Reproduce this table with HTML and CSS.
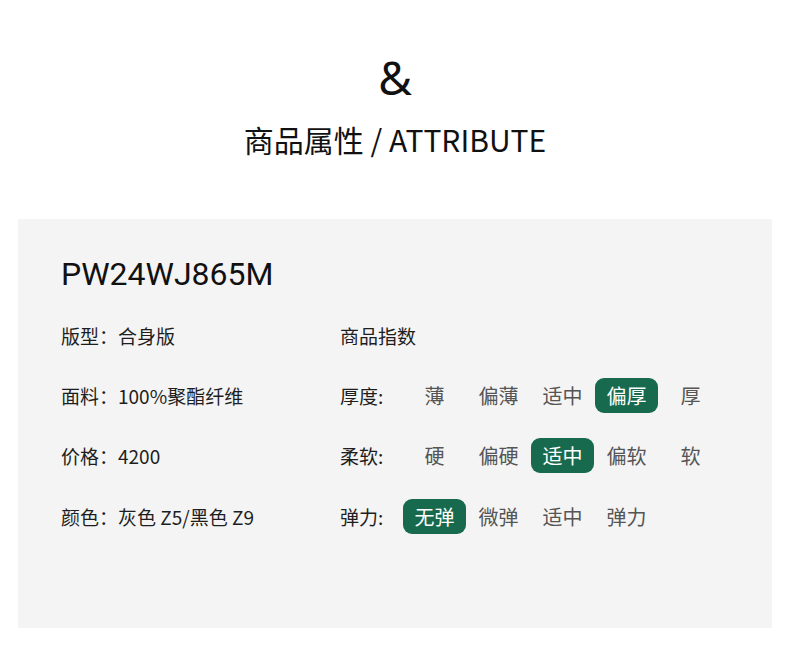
FILE: index.html
```html
<!DOCTYPE html>
<html lang="zh-CN">
<head>
<meta charset="utf-8">
<link rel="stylesheet" href="styles.css">
</head>
<body>
<header class="head">
  <div class="amp">&amp;</div>
  <h1 class="title">商品属性 / ATTRIBUTE</h1>
</header>
<section class="panel">
  <h2 class="code">PW24WJ865M</h2>
  <div class="cols">
    <div class="info">
      <div class="row">版型：合身版</div>
      <div class="row">面料：100%聚酯纤维</div>
      <div class="row">价格：4200</div>
      <div class="row">颜色：灰色 Z5/黑色 Z9</div>
    </div>
    <div class="index">
      <div class="row">商品指数</div>
      <div class="row">
        <span class="label">厚度:</span>
        <span class="chip">薄</span><span class="chip">偏薄</span><span class="chip">适中</span><span class="chip on">偏厚</span><span class="chip">厚</span>
      </div>
      <div class="row">
        <span class="label">柔软:</span>
        <span class="chip">硬</span><span class="chip">偏硬</span><span class="chip on">适中</span><span class="chip">偏软</span><span class="chip">软</span>
      </div>
      <div class="row">
        <span class="label">弹力:</span>
        <span class="chip on">无弹</span><span class="chip">微弹</span><span class="chip">适中</span><span class="chip">弹力</span>
      </div>
    </div>
  </div>
</section>
</body>
</html>
```
FILE: styles.css
```css
* { box-sizing: border-box; }
html, body { margin: 0; padding: 0; background: #fff; }
body {
  width: 790px;
  height: 671px;
  overflow: hidden;
  font-family: "Noto Sans CJK SC", "Noto Sans", sans-serif;
  color: #111;
}
.head {
  display: flex;
  flex-direction: column;
  align-items: center;
  padding-top: 47px;
  height: 219px;
}
.amp {
  font-family: "Noto Sans", sans-serif;
  font-size: 46px;
  line-height: 60px;
  color: #111;
}
.title {
  margin: 12px 0 0 0;
  font-size: 30px;
  font-weight: 400;
  line-height: 40px;
  color: #111;
}
.panel {
  margin: 0 18px;
  height: 409px;
  background: #f4f4f4;
  padding: 32px 0 0 43px;
}
.code {
  margin: 0;
  font-family: Roboto, "Noto Sans", sans-serif;
  font-size: 32px;
  font-weight: 400;
  line-height: 46px;
  color: #111;
}
.cols {
  display: flex;
  margin-top: 8px;
}
.info { width: 279px; }
.row {
  height: 60.3px;
  display: flex;
  align-items: center;
  font-size: 19px;
  color: #1e1e1e;
}
.label {
  width: 63px;
}
.chip {
  width: 63px;
  height: 35px;
  margin-right: 1px;
  display: flex;
  align-items: center;
  justify-content: center;
  font-size: 20px;
  color: #555;
  border-radius: 9px;
}
.chip.on {
  background: #186a4e;
  color: #fff;
}
```
